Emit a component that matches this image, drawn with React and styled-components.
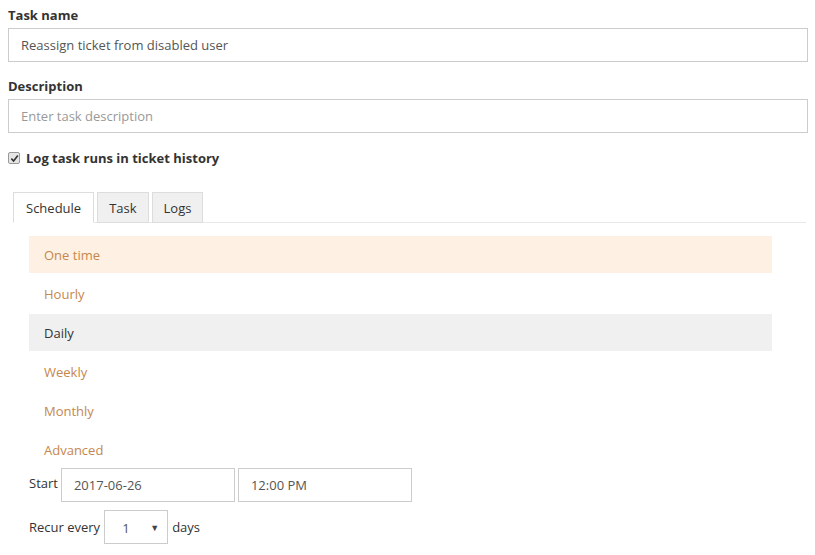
import React from 'react'
import styled, { createGlobalStyle } from 'styled-components'

const GlobalStyle = createGlobalStyle`
  body {
    margin: 0;
    background: #fff;
    font-family: "Open Sans", "Noto Sans", sans-serif;
    font-size: 13px;
    color: #333;
  }
`

const Page = styled.div`
  padding: 6px 8px 0 8px;
  width: 800px;
`

const Label = styled.div`
  font-weight: bold;
  font-size: 13px;
  line-height: 18px;
  margin-bottom: 4px;
`

const Field = styled.div`
  margin-bottom: 15px;
`

const TextInput = styled.div`
  box-sizing: border-box;
  height: 34px;
  border: 1px solid #ccc;
  padding: 0 12px;
  display: flex;
  align-items: center;
  color: ${p => (p.placeholder ? '#999' : '#555')};
  width: ${p => p.width || '100%'};
`

const CheckRow = styled.label`
  display: flex;
  align-items: center;
  gap: 6px;
  font-weight: bold;
  padding-top: 1px;
`

const Check = styled.span`
  box-sizing: border-box;
  width: 12px;
  height: 12px;
  border: 1px solid #999;
  border-radius: 2px;
  background: #e6e6e6;
  display: flex;
  align-items: center;
  justify-content: center;
`

const Tabs = styled.div`
  display: flex;
  gap: 3px;
  margin: 25px 2px 0 5px;
  border-bottom: 1px solid #e8e8e8;
`

const Tab = styled.div`
  box-sizing: border-box;
  height: 31px;
  margin-bottom: -1px;
  padding: 0 ${p => (p.active ? 12 : 11)}px;
  display: flex;
  align-items: center;
  border: 1px solid #ddd;
  border-bottom-color: ${p => (p.active ? '#fff' : '#ddd')};
  background: ${p => (p.active ? '#fff' : '#f0f0f0')};
  color: #333;
`

const List = styled.div`
  margin: 13px 0 0 21px;
  width: 743px;
  display: flex;
  flex-direction: column;
  gap: 2px;
`

const Item = styled.div`
  height: 37px;
  padding-left: 15px;
  display: flex;
  align-items: center;
  color: ${p => (p.active ? '#333' : '#c5874e')};
  background: ${p => (p.active ? '#f0f0f0' : p.hover ? '#fef1e3' : 'transparent')};
`

const Row = styled.div`
  display: flex;
  align-items: center;
  gap: ${p => p.gap || 4}px;
  margin-left: 21px;
  margin-top: ${p => p.top || 0}px;
`

const RowLabel = styled.span`
  margin-top: ${p => p.up || 0}px;
`

const Select = styled.div`
  box-sizing: border-box;
  width: 64px;
  height: 34px;
  border: 1px solid #ccc;
  display: flex;
  align-items: center;
  justify-content: space-between;
  padding: 2px 8px 0 17px;
  color: #555;
`

const Arrow = styled.span`
  font-size: 9px;
  color: #444;
  margin-top: -2px;
`

const options = ['One time', 'Hourly', 'Daily', 'Weekly', 'Monthly', 'Advanced']

export default function App() {
  return (
    <Page>
      <GlobalStyle />
      <Field>
        <Label>Task name</Label>
        <TextInput>Reassign ticket from disabled user</TextInput>
      </Field>
      <Field>
        <Label>Description</Label>
        <TextInput placeholder>Enter task description</TextInput>
      </Field>
      <CheckRow>
        <Check>
          <svg width="9" height="9" viewBox="0 0 10 10">
            <path d="M1.5 5.2 L4 7.8 L8.7 1.8" fill="none" stroke="#333" strokeWidth="1.8" />
          </svg>
        </Check>
        Log task runs in ticket history
      </CheckRow>
      <Tabs>
        <Tab active>Schedule</Tab>
        <Tab>Task</Tab>
        <Tab>Logs</Tab>
      </Tabs>
      <List>
        {options.map((o, i) => (
          <Item key={o} hover={i === 0} active={o === 'Daily'}>{o}</Item>
        ))}
      </List>
      <Row top={0} gap={3}>
        <RowLabel up={-4}>Start</RowLabel>
        <TextInput width="174px">2017-06-26</TextInput>
        <TextInput width="174px">12:00 PM</TextInput>
      </Row>
      <Row top={8}>
        <RowLabel>Recur every</RowLabel>
        <Select>
          1<Arrow>▼</Arrow>
        </Select>
        <RowLabel>days</RowLabel>
      </Row>
    </Page>
  )
}
